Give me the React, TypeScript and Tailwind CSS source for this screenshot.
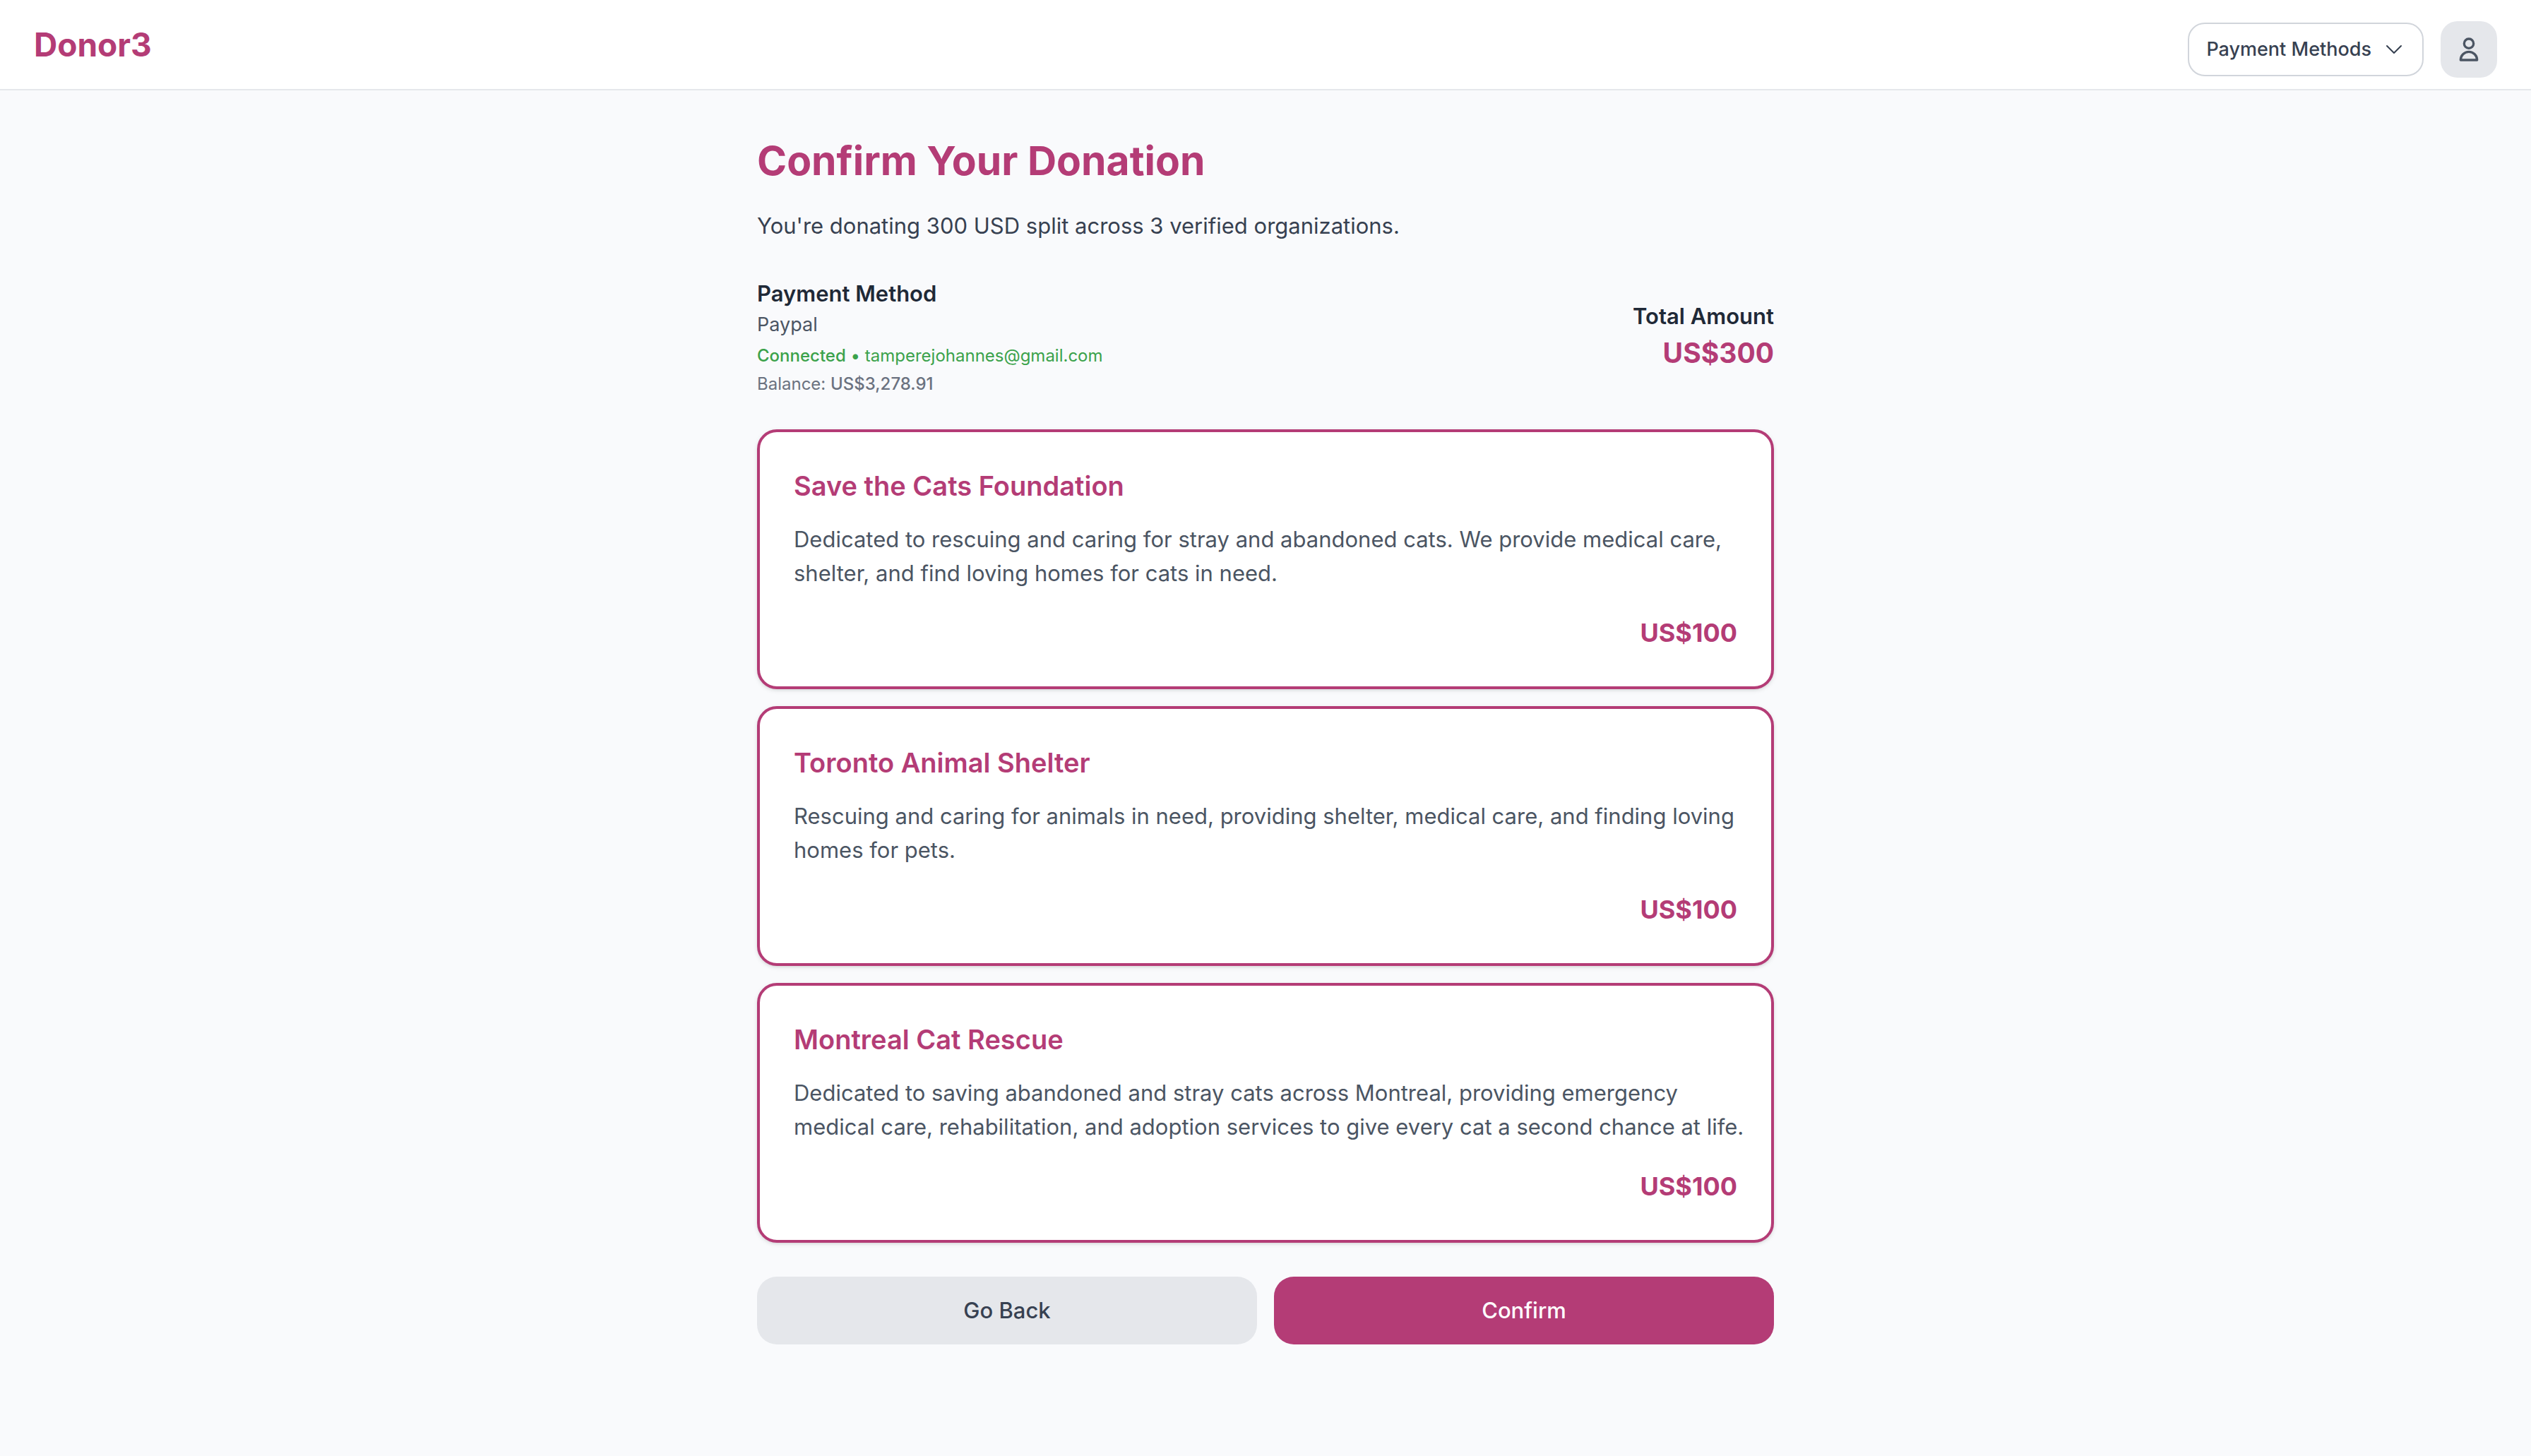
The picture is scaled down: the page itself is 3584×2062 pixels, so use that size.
import React from "react";

const organizations = [
  {
    name: "Save the Cats Foundation",
    description:
      "Dedicated to rescuing and caring for stray and abandoned cats. We provide medical care, shelter, and find loving homes for cats in need.",
    amount: "US$100",
  },
  {
    name: "Toronto Animal Shelter",
    description:
      "Rescuing and caring for animals in need, providing shelter, medical care, and finding loving homes for pets.",
    amount: "US$100",
  },
  {
    name: "Montreal Cat Rescue",
    description:
      "Dedicated to saving abandoned and stray cats across Montreal, providing emergency medical care, rehabilitation, and adoption services to give every cat a second chance at life.",
    amount: "US$100",
  },
];

function ChevronDownIcon() {
  return (
    <svg className="size-8" viewBox="0 0 24 24" fill="none" stroke="currentColor" strokeWidth={1.5} strokeLinecap="round" strokeLinejoin="round" aria-hidden="true">
      <path d="m19.5 8.25-7.5 7.5-7.5-7.5" />
    </svg>
  );
}

function UserIcon() {
  return (
    <svg className="size-10" viewBox="0 0 24 24" fill="none" stroke="currentColor" strokeWidth={2} strokeLinecap="round" strokeLinejoin="round" aria-hidden="true">
      <path d="M16 7a4 4 0 11-8 0 4 4 0 018 0zM12 14a7 7 0 00-7 7h14a7 7 0 00-7-7z" />
    </svg>
  );
}

function Header() {
  return (
    <header className="flex h-32 items-center justify-between border-b-2 border-[#e5e7eb] bg-white px-12">
      <a href="#" className="text-[46px] leading-[64px] font-bold text-[#b43c76]">
        Donor3
      </a>
      <div className="flex items-center gap-6 self-end pb-4">
        <button
          type="button"
          className="flex items-center gap-4 rounded-3xl border-2 border-[#d1d5db] bg-white px-6 py-4 text-[27px] leading-10 font-medium text-[#374151]"
        >
          Payment Methods
          <ChevronDownIcon />
        </button>
        <button
          type="button"
          aria-label="Account"
          className="flex size-20 items-center justify-center rounded-3xl bg-[#e5e7eb] text-[#4b5563]"
        >
          <UserIcon />
        </button>
      </div>
    </header>
  );
}

function PaymentSummary() {
  return (
    <section className="mt-12 flex items-center justify-between">
      <div>
        <h2 className="text-[31px] leading-[48px] font-semibold text-[#1f2937]">Payment Method</h2>
        <p className="text-[27px] leading-10 text-[#4b5563]">Paypal</p>
        <p className="mt-2 text-2xl leading-8 text-[#3ba24b]">
          <span className="font-medium">Connected</span> • tamperejohannes@gmail.com
        </p>
        <p className="mt-2 text-2xl leading-8 text-[#6b7280]">
          Balance: <span className="font-medium">US$3,278.91</span>
        </p>
      </div>
      <div className="text-right">
        <h2 className="text-[31px] leading-[48px] font-semibold text-[#1f2937]">Total Amount</h2>
        <p className="text-[39px] leading-[56px] font-bold text-[#b43c76]">US$300</p>
      </div>
    </section>
  );
}

export default function App() {
  return (
    <div className="min-h-screen bg-[#f9fafc] font-['Inter',sans-serif]">
      <Header />
      <main className="mx-auto max-w-[1440px] py-16">
        <h1 className="text-[57px] leading-[72px] font-bold text-[#b43c76]">Confirm Your Donation</h1>
        <p className="mt-8 text-[31px] leading-[48px] text-[#374151]">
          You're donating 300 USD split across 3 verified organizations.
        </p>
        <PaymentSummary />
        <ul className="mt-12 flex flex-col gap-6">
          {organizations.map((org) => (
            <li
              key={org.name}
              className="rounded-[28px] border-4 border-[#b43c76] bg-white py-12 pr-8 pl-12 shadow-[0_2px_6px_rgba(0,0,0,0.1),0_2px_4px_-2px_rgba(0,0,0,0.1)]"
            >
              <h3 className="text-[38px] leading-[56px] font-semibold text-[#b43c76]">{org.name}</h3>
              <p className="mt-6 text-[31px] leading-[48px] text-[#4b5563]">{org.description}</p>
              <p className="mt-8 pr-4 text-right text-4xl leading-[56px] font-bold text-[#b43c76]">{org.amount}</p>
            </li>
          ))}
        </ul>
        <div className="mt-12 grid grid-cols-2 gap-6">
          <button type="button" className="rounded-[28px] bg-[#e5e7eb] py-6 text-[31px] leading-[48px] font-medium text-[#374151]">
            Go Back
          </button>
          <button type="button" className="rounded-[28px] bg-[#b43c76] py-6 text-[31px] leading-[48px] font-medium text-white">
            Confirm
          </button>
        </div>
      </main>
    </div>
  );
}
